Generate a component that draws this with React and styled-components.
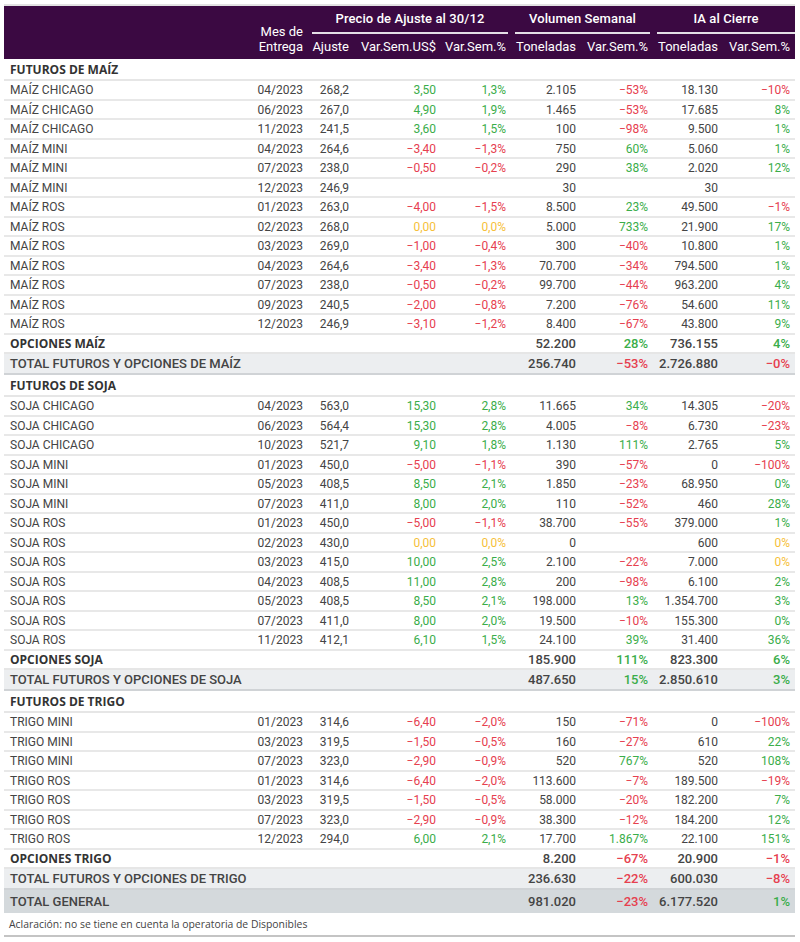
import React from "react";
import styled, { createGlobalStyle, css } from "styled-components";

const Global = createGlobalStyle`
  *, *::before, *::after { box-sizing: border-box; }
  html, body { margin: 0; padding: 0; background: #ffffff; }
  body { font-family: Roboto, "Liberation Sans", Arial, sans-serif; }
`;

const Wrap = styled.div`
  width: 800px;
  padding: 4px 5px 0 4px;
`;

const Table = styled.table`
  width: 791px;
  table-layout: fixed;
  border-collapse: separate;
  border-spacing: 0;
  border-top: 2px solid #e2e2e2;
  color: #444444;
  font-family: Roboto, "Liberation Sans", Arial, sans-serif;
  font-size: 12px;
`;

const Head = styled.thead`
  background: #3b0942;
  color: #ffffff;
`;

const HeadRow = styled.tr`
  height: ${(p) => p.$h}px;
`;

const Th = styled.th`
  padding: 0 4px 0 0;
  font-size: 13px;
  font-weight: 400;
  text-align: right;
  white-space: nowrap;
  line-height: 14.5px;
  vertical-align: ${(p) => (p.$bottom ? "bottom" : "middle")};
  padding-bottom: ${(p) => (p.$bottom ? "5px" : "0")};
  padding-top: ${(p) => (p.$bottom ? "0" : "1px")};
  ${(p) => p.$last && css`padding-right: 5px;`}
`;

const GroupTh = styled.th`
  padding: 0 2px 0 5px;
  vertical-align: bottom;
  font-weight: 500;
  font-size: 13px;
  letter-spacing: 0.1px;
`;

const GroupLabel = styled.div`
  text-align: center;
  line-height: 15px;
  padding-bottom: 6px;
  border-bottom: 2px solid #e4dfe6;
  margin-right: ${(p) => (p.$last ? "-2px" : "0")};
`;

const toneColor = {
  pos: "#3aad4a",
  neg: "#e6404f",
  zero: "#f6bf3a",
};

const rowKinds = {
  data: css`
    height: 19.5px;
    border-bottom: 2px solid #e8e8e8;
    padding-top: 1px;
  `,
  section: css`
    height: 22px;
    border-bottom: 2px solid #e6e6e6;
    padding-top: 2px;
  `,
  options: css`
    height: 19.5px;
    border-bottom: 2px solid #e6e6e6;
    padding-top: 1px;
  `,
  total: css`
    height: 21px;
    background: #eceef0;
    border-bottom: 2px solid #d0d3d6;
    padding-top: 1px;
  `,
  grand: css`
    height: 23px;
    background: #d4d9dc;
    padding-top: 1px;
  `,
  note: css`
    height: 24px;
    border-bottom: 2px solid #c4c4c4;
  `,
};

const Td = styled.td`
  padding: 0 4px 0 0;
  text-align: right;
  white-space: nowrap;
  overflow: visible;
  line-height: 14px;
  vertical-align: middle;
  ${(p) => rowKinds[p.$kind]}
  ${(p) => p.$last && css`padding-right: 5px;`}
  ${(p) => p.$tone && css`color: ${toneColor[p.$tone]};`}
  ${(p) =>
    (p.$kind === "options" || p.$kind === "total" || p.$kind === "grand") &&
    css`
      font-size: 13px;
      font-weight: 500;
    `}
`;

const NameTd = styled(Td)`
  text-align: left;
  padding-left: 6px;
  ${(p) =>
    (p.$kind === "section" || p.$kind === "options") &&
    css`
      font-family: "Open Sans", "Noto Sans", sans-serif;
      font-weight: 700;
      font-size: 12px;
      color: #333333;
    `}
  ${(p) =>
    (p.$kind === "total" || p.$kind === "grand") &&
    css`
      font-size: 13px;
      font-weight: 500;
      color: #444444;
    `}
`;

const NoteTd = styled(Td)`
  text-align: left;
  padding-left: 5px;
  font-family: "Open Sans", "Noto Sans", sans-serif;
  font-size: 10.4px;
  color: #444444;
`;

const widths = [251, 52, 46, 87, 70, 70, 72, 70, 73];

const tone = (v) => {
  if (!v) return null;
  if (v.endsWith("*")) return "pos";
  if (v.startsWith("−")) return "neg";
  if (/^0(,0+)?%?$/.test(v)) return "zero";
  return "pos";
};
const clean = (v) => (v && v.endsWith("*") ? v.slice(0, -1) : v);

const sections = [
  {
    title: "FUTUROS DE MAÍZ",
    rows: [
      ["MAÍZ CHICAGO", "04/2023", "268,2", "3,50", "1,3%", "2.105", "−53%", "18.130", "−10%"],
      ["MAÍZ CHICAGO", "06/2023", "267,0", "4,90", "1,9%", "1.465", "−53%", "17.685", "8%"],
      ["MAÍZ CHICAGO", "11/2023", "241,5", "3,60", "1,5%", "100", "−98%", "9.500", "1%"],
      ["MAÍZ MINI", "04/2023", "264,6", "−3,40", "−1,3%", "750", "60%", "5.060", "1%"],
      ["MAÍZ MINI", "07/2023", "238,0", "−0,50", "−0,2%", "290", "38%", "2.020", "12%"],
      ["MAÍZ MINI", "12/2023", "246,9", "", "", "30", "", "30", ""],
      ["MAÍZ ROS", "01/2023", "263,0", "−4,00", "−1,5%", "8.500", "23%", "49.500", "−1%"],
      ["MAÍZ ROS", "02/2023", "268,0", "0,00", "0,0%", "5.000", "733%", "21.900", "17%"],
      ["MAÍZ ROS", "03/2023", "269,0", "−1,00", "−0,4%", "300", "−40%", "10.800", "1%"],
      ["MAÍZ ROS", "04/2023", "264,6", "−3,40", "−1,3%", "70.700", "−34%", "794.500", "1%"],
      ["MAÍZ ROS", "07/2023", "238,0", "−0,50", "−0,2%", "99.700", "−44%", "963.200", "4%"],
      ["MAÍZ ROS", "09/2023", "240,5", "−2,00", "−0,8%", "7.200", "−76%", "54.600", "11%"],
      ["MAÍZ ROS", "12/2023", "246,9", "−3,10", "−1,2%", "8.400", "−67%", "43.800", "9%"],
    ],
    options: ["OPCIONES MAÍZ", "52.200", "28%", "736.155", "4%"],
    total: ["TOTAL FUTUROS Y OPCIONES DE MAÍZ", "256.740", "−53%", "2.726.880", "−0%"],
  },
  {
    title: "FUTUROS DE SOJA",
    rows: [
      ["SOJA CHICAGO", "04/2023", "563,0", "15,30", "2,8%", "11.665", "34%", "14.305", "−20%"],
      ["SOJA CHICAGO", "06/2023", "564,4", "15,30", "2,8%", "4.005", "−8%", "6.730", "−23%"],
      ["SOJA CHICAGO", "10/2023", "521,7", "9,10", "1,8%", "1.130", "111%", "2.765", "5%"],
      ["SOJA MINI", "01/2023", "450,0", "−5,00", "−1,1%", "390", "−57%", "0", "−100%"],
      ["SOJA MINI", "05/2023", "408,5", "8,50", "2,1%", "1.850", "−23%", "68.950", "0%*"],
      ["SOJA MINI", "07/2023", "411,0", "8,00", "2,0%", "110", "−52%", "460", "28%"],
      ["SOJA ROS", "01/2023", "450,0", "−5,00", "−1,1%", "38.700", "−55%", "379.000", "1%"],
      ["SOJA ROS", "02/2023", "430,0", "0,00", "0,0%", "0", "", "600", "0%"],
      ["SOJA ROS", "03/2023", "415,0", "10,00", "2,5%", "2.100", "−22%", "7.000", "0%"],
      ["SOJA ROS", "04/2023", "408,5", "11,00", "2,8%", "200", "−98%", "6.100", "2%"],
      ["SOJA ROS", "05/2023", "408,5", "8,50", "2,1%", "198.000", "13%", "1.354.700", "3%"],
      ["SOJA ROS", "07/2023", "411,0", "8,00", "2,0%", "19.500", "−10%", "155.300", "0%*"],
      ["SOJA ROS", "11/2023", "412,1", "6,10", "1,5%", "24.100", "39%", "31.400", "36%"],
    ],
    options: ["OPCIONES SOJA", "185.900", "111%", "823.300", "6%"],
    total: ["TOTAL FUTUROS Y OPCIONES DE SOJA", "487.650", "15%", "2.850.610", "3%"],
  },
  {
    title: "FUTUROS DE TRIGO",
    rows: [
      ["TRIGO MINI", "01/2023", "314,6", "−6,40", "−2,0%", "150", "−71%", "0", "−100%"],
      ["TRIGO MINI", "03/2023", "319,5", "−1,50", "−0,5%", "160", "−27%", "610", "22%"],
      ["TRIGO MINI", "07/2023", "323,0", "−2,90", "−0,9%", "520", "767%", "520", "108%"],
      ["TRIGO ROS", "01/2023", "314,6", "−6,40", "−2,0%", "113.600", "−7%", "189.500", "−19%"],
      ["TRIGO ROS", "03/2023", "319,5", "−1,50", "−0,5%", "58.000", "−20%", "182.200", "7%"],
      ["TRIGO ROS", "07/2023", "323,0", "−2,90", "−0,9%", "38.300", "−12%", "184.200", "12%"],
      ["TRIGO ROS", "12/2023", "294,0", "6,00", "2,1%", "17.700", "1.867%", "22.100", "151%"],
    ],
    options: ["OPCIONES TRIGO", "8.200", "−67%", "20.900", "−1%"],
    total: ["TOTAL FUTUROS Y OPCIONES DE TRIGO", "236.630", "−22%", "600.030", "−8%"],
  },
];

const grand = ["TOTAL GENERAL", "981.020", "−23%", "6.177.520", "1%"];

const toned = [3, 4, 6, 8];

function DataRow({ r }) {
  return (
    <tr>
      {r.map((v, i) =>
        i === 0 ? (
          <NameTd key={i} $kind="data">{v}</NameTd>
        ) : (
          <Td key={i} $kind="data" $last={i === 8} $tone={toned.includes(i) ? tone(v) : null}>
            {clean(v)}
          </Td>
        )
      )}
    </tr>
  );
}

function SummaryRow({ kind, r }) {
  const [label, vol, volVar, ia, iaVar] = r;
  return (
    <tr>
      <NameTd $kind={kind} colSpan={5}>{label}</NameTd>
      <Td $kind={kind}>{vol}</Td>
      <Td $kind={kind} $tone={tone(volVar)}>{volVar}</Td>
      <Td $kind={kind}>{ia}</Td>
      <Td $kind={kind} $last $tone={tone(iaVar)}>{iaVar}</Td>
    </tr>
  );
}

export default function App() {
  return (
    <Wrap>
      <Global />
      <Table>
        <colgroup>
          {widths.map((w, i) => (
            <col key={i} style={{ width: w }} />
          ))}
        </colgroup>
        <Head>
          <HeadRow $h={28}>
            <Th rowSpan={2} />
            <Th rowSpan={2} $bottom>
              Mes de
              <br />
              Entrega
            </Th>
            <GroupTh colSpan={3}>
              <GroupLabel>Precio de Ajuste al 30/12</GroupLabel>
            </GroupTh>
            <GroupTh colSpan={2}>
              <GroupLabel>Volumen Semanal</GroupLabel>
            </GroupTh>
            <GroupTh colSpan={2}>
              <GroupLabel $last>IA al Cierre</GroupLabel>
            </GroupTh>
          </HeadRow>
          <HeadRow $h={25}>
            <Th>Ajuste</Th>
            <Th>Var.Sem.US$</Th>
            <Th>Var.Sem.%</Th>
            <Th>Toneladas</Th>
            <Th>Var.Sem.%</Th>
            <Th>Toneladas</Th>
            <Th $last>Var.Sem.%</Th>
          </HeadRow>
        </Head>
        <tbody>
          {sections.map((s) => (
            <React.Fragment key={s.title}>
              <tr>
                <NameTd $kind="section" colSpan={9}>{s.title}</NameTd>
              </tr>
              {s.rows.map((r, i) => (
                <DataRow key={i} r={r} />
              ))}
              <SummaryRow kind="options" r={s.options} />
              <SummaryRow kind="total" r={s.total} />
            </React.Fragment>
          ))}
          <SummaryRow kind="grand" r={grand} />
          <tr>
            <NoteTd $kind="note" colSpan={9}>
              Aclaración: no se tiene en cuenta la operatoria de Disponibles
            </NoteTd>
          </tr>
        </tbody>
      </Table>
    </Wrap>
  );
}
